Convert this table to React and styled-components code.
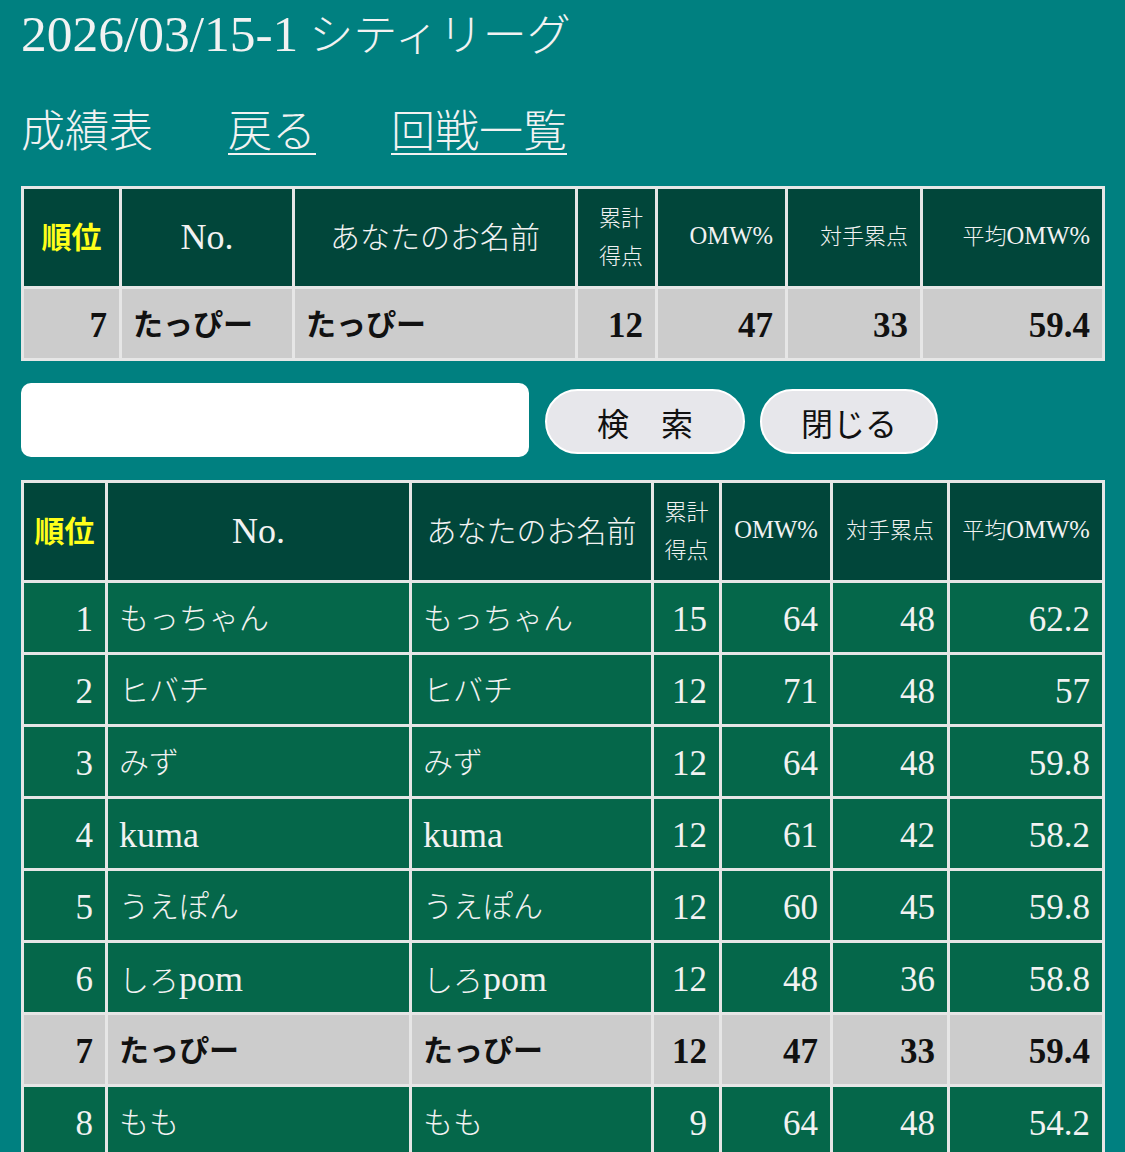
import React from 'react';
import styled, { createGlobalStyle } from 'styled-components';

const Global = createGlobalStyle`
  html, body { margin: 0; padding: 0; background: #008080; }
  body {
    font-family: "Liberation Serif", "Noto Sans CJK JP", serif;
    color: #f2f2f2;
  }
`;

const Page = styled.div`
  padding: 0 20px 0 21px;
`;

const Title = styled.h1`
  margin: 0;
  font-weight: 300;
  font-size: 44px;
  line-height: 74px;
  height: 74px;
  white-space: nowrap;
`;

const Lat = styled.span`
  font-size: ${p => p.$scale || 1.12}em;
  line-height: 1;
`;

const Nav = styled.nav`
  display: flex;
  align-items: center;
  gap: 75px;
  margin-top: 17px;
  height: 74px;
`;

const NavItem = styled.a`
  font-size: 44px;
  font-weight: 300;
  color: #f2f2f2;
  text-decoration: ${p => (p.$link ? 'underline' : 'none')};
  text-decoration-thickness: 2px;
  text-underline-offset: 6px;
`;

const Table = styled.table`
  border-collapse: separate;
  border-spacing: 3px;
  background: #e6e6e6;
  table-layout: fixed;
  width: 1084px;
  margin-top: ${p => p.$mt || 0}px;
`;

const Th = styled.th`
  background: #01463a;
  color: #f2f2f2;
  font-weight: 300;
  font-size: ${p => (p.$big ? 30 : 22)}px;
  line-height: ${p => (p.$stack ? '38px' : 1.2)};
  height: 97px;
  box-sizing: border-box;
  padding: 0 ${p => (p.$align === 'right' ? 12 : 0)}px 0 0;
  text-align: ${p => p.$align || 'center'};
  white-space: nowrap;
  overflow: hidden;
`;

const RankTh = styled(Th)`
  color: #ffff1a;
  font-weight: bold;
  font-size: 30px;
`;

const Td = styled.td`
  background: ${p => (p.$me ? '#cccccc' : '#05674a')};
  color: ${p => (p.$me ? '#111111' : '#f2f2f2')};
  font-weight: ${p => (p.$me ? 'bold' : 300)};
  font-size: ${p => (p.$num ? 35 : 30)}px;
  line-height: 1;
  height: 69px;
  box-sizing: border-box;
  padding: 3px ${p => (p.$num ? 12 : 11)}px 0;
  text-align: ${p => (p.$num ? 'right' : 'left')};
  white-space: nowrap;
  overflow: hidden;
`;

const SearchRow = styled.div`
  display: flex;
  align-items: center;
  gap: 15px;
  margin-top: 22px;
  height: 74px;
`;

const SearchInput = styled.input`
  width: 508px;
  height: 74px;
  box-sizing: border-box;
  border: none;
  border-radius: 10px;
  background: #ffffff;
  margin-right: 1px;
  font-size: 28px;
  padding: 0 14px;
  outline: none;
`;

const Button = styled.button`
  width: ${p => p.$w}px;
  height: 65px;
  margin-top: 3px;
  box-sizing: border-box;
  border: 2px solid #ffffff;
  border-radius: 33px;
  background: #e7e7eb;
  color: #111111;
  font-family: "Noto Sans CJK JP", sans-serif;
  font-size: 32px;
  line-height: 1;
  padding: 0;
  display: flex;
  align-items: center;
  justify-content: center;
`;

const cols1 = [95, 170, 280, 77, 127, 132, 179];
const cols2 = [81, 301, 239, 65, 108, 114, 152];

const rows = [
  [1, 'もっちゃん', 15, 64, 48, '62.2'],
  [2, 'ヒバチ', 12, 71, 48, '57'],
  [3, 'みず', 12, 64, 48, '59.8'],
  [4, 'kuma', 12, 61, 42, '58.2'],
  [5, 'うえぽん', 12, 60, 45, '59.8'],
  [6, 'しろpom', 12, 48, 36, '58.8'],
  [7, 'たっぴー', 12, 47, 33, '59.4'],
  [8, 'もも', 9, 64, 48, '54.2'],
];

function mixed(text, scale) {
  return text.split(/([A-Za-z0-9.%\-/]+)/).map((part, i) =>
    /^[A-Za-z0-9.%\-/]+$/.test(part) ? (
      <Lat key={i} $scale={scale}>{part}</Lat>
    ) : (
      part
    )
  );
}

function Head({ cols, numAlign }) {
  return (
    <>
      <colgroup>
        {cols.map((w, i) => (
          <col key={i} style={{ width: w }} />
        ))}
      </colgroup>
      <thead>
        <tr>
          <RankTh>順位</RankTh>
          <Th $big>{mixed('No.', 1.2)}</Th>
          <Th $big>あなたのお名前</Th>
          <Th $stack $align={numAlign}>
            累計
            <br />
            得点
          </Th>
          <Th $align={numAlign}>{mixed('OMW%', 1.12)}</Th>
          <Th $align={numAlign}>対手累点</Th>
          <Th $align={numAlign}>{mixed('平均OMW%', 1.12)}</Th>
        </tr>
      </thead>
    </>
  );
}

function Row({ r, me }) {
  const [rank, name, pts, omw, opp, avg] = r;
  return (
    <tr>
      <Td $me={me} $num>{rank}</Td>
      <Td $me={me}>{mixed(name, 1.2)}</Td>
      <Td $me={me}>{mixed(name, 1.2)}</Td>
      <Td $me={me} $num>{pts}</Td>
      <Td $me={me} $num>{omw}</Td>
      <Td $me={me} $num>{opp}</Td>
      <Td $me={me} $num>{avg}</Td>
    </tr>
  );
}

export default function App() {
  return (
    <Page>
      <Global />
      <Title>{mixed('2026/03/15-1 シティリーグ', 1.17)}</Title>
      <Nav>
        <NavItem as="span">成績表</NavItem>
        <NavItem $link href="#">戻る</NavItem>
        <NavItem $link href="#">回戦一覧</NavItem>
      </Nav>
      <Table $mt={21}>
        <Head cols={cols1} numAlign="right" />
        <tbody>
          <Row r={rows[6]} me />
        </tbody>
      </Table>
      <SearchRow>
        <SearchInput type="text" />
        <Button $w={200}>検　索</Button>
        <Button $w={178}>閉じる</Button>
      </SearchRow>
      <Table $mt={23}>
        <Head cols={cols2} numAlign="center" />
        <tbody>
          {rows.map(r => (
            <Row key={r[0]} r={r} me={r[0] === 7} />
          ))}
        </tbody>
      </Table>
    </Page>
  );
}
